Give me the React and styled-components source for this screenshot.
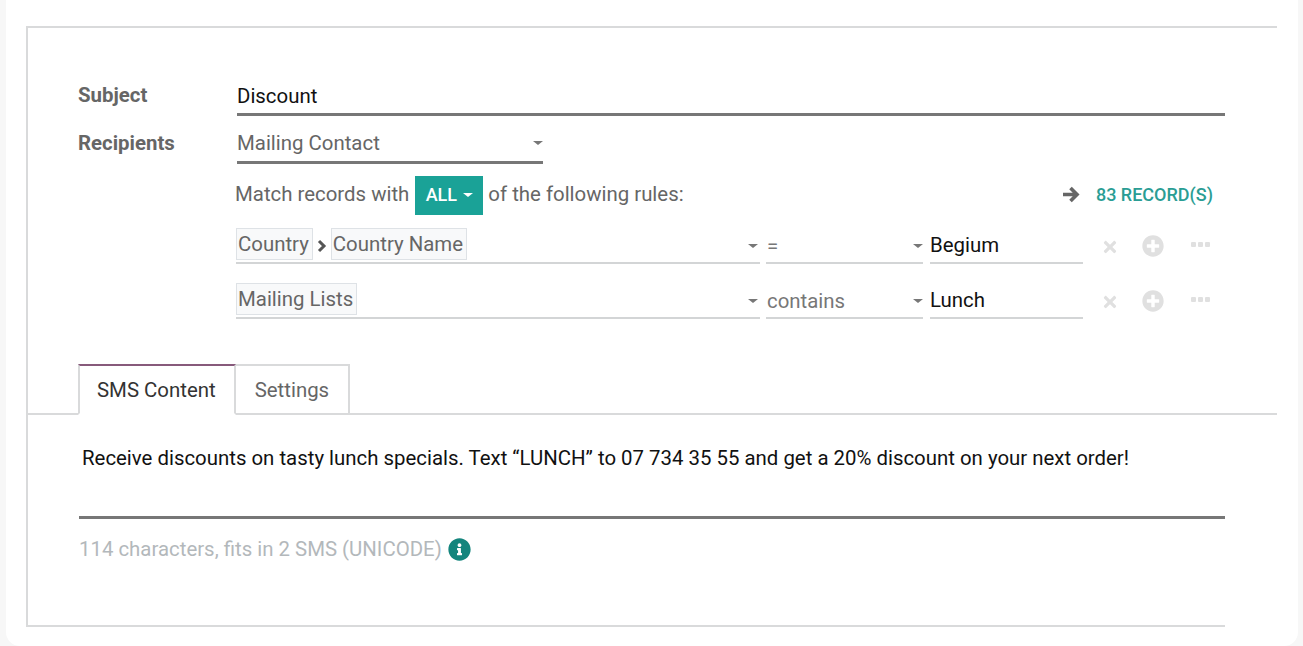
import React from 'react';
import styled, { createGlobalStyle } from 'styled-components';
import { FaInfoCircle, FaPlusCircle, FaTimes } from 'react-icons/fa';

const Global = createGlobalStyle`
  html, body {
    margin: 0;
    padding: 0;
    height: 100%;
    background: #f7f7f7;
    overflow: hidden;
  }
  body {
    font-family: Roboto, "Liberation Sans", sans-serif;
    font-size: 20.4px;
    color: #666;
  }
`;

const rules = [
  { tags: ['Country', 'Country Name'], op: '=', value: 'Begium' },
  { tags: ['Mailing Lists'], op: 'contains', value: 'Lunch' },
];

export default function App() {
  return (
    <Page>
      <Global />
      <Card>
        <Sheet>
          <Header>
            <FieldRow>
              <Label>Subject</Label>
              <TextField>Discount</TextField>
            </FieldRow>
            <FieldRow>
              <Label>Recipients</Label>
              <SelectField>
                Mailing Contact
                <Caret />
              </SelectField>
            </FieldRow>
            <MatchRow>
              <MatchText>Match records with</MatchText>
              <AllButton>
                ALL
                <Caret $light />
              </AllButton>
              <MatchText>of the following rules:</MatchText>
              <Records>
                <ArrowIcon viewBox="0 0 18 17">
                  <path d="M1 8.5H15M8.5 2L15 8.5 8.5 15" />
                </ArrowIcon>
                <RecordCount>83 RECORD(S)</RecordCount>
              </Records>
            </MatchRow>
            <Rules>
              {rules.map((rule) => (
                <RuleRow key={rule.value}>
                  <PathCell>
                    {rule.tags.map((tag, i) => (
                      <React.Fragment key={tag}>
                        {i > 0 && (
                          <ChevronIcon viewBox="0 0 10 14">
                            <path d="M2 2l5 5-5 5" />
                          </ChevronIcon>
                        )}
                        <Tag>{tag}</Tag>
                      </React.Fragment>
                    ))}
                    <Caret />
                  </PathCell>
                  <OpCell>
                    {rule.op}
                    <Caret />
                  </OpCell>
                  <ValueCell>{rule.value}</ValueCell>
                  <RuleActions>
                    <FaTimes size={18} />
                    <FaPlusCircle size={22} />
                    <Dots>
                      <i />
                      <i />
                      <i />
                    </Dots>
                  </RuleActions>
                </RuleRow>
              ))}
            </Rules>
          </Header>
          <TabBar>
            <Tab $active>SMS Content</Tab>
            <Tab>Settings</Tab>
          </TabBar>
          <Body>
            <Message>
              Receive discounts on tasty lunch specials. Text “LUNCH” to 07 734 35 55 and get a 20% discount on your next order!
            </Message>
            <Count>
              114 characters, fits in 2 SMS (UNICODE)
              <FaInfoCircle size={23} />
            </Count>
          </Body>
        </Sheet>
      </Card>
    </Page>
  );
}

const Page = styled.div`
  height: 646px;
  padding: 0 5px 0 6px;
  box-sizing: border-box;
`;

const Card = styled.div`
  height: 100%;
  padding: 26px 21px 0 20px;
  box-sizing: border-box;
  background: #fff;
  border-radius: 0 0 14px 14px;
`;

const Sheet = styled.div`
  height: 601px;
  box-sizing: border-box;
  display: flex;
  flex-direction: column;
  border-top: 2px solid #d9dadb;
  border-left: 2px solid #d9dadb;
`;

const Header = styled.div`
  height: 336px;
  flex: none;
  padding: 43px 0 0 50px;
  box-sizing: border-box;
  width: 1197px;
`;

const FieldRow = styled.div`
  display: flex;
  height: 48px;
`;

const Label = styled.div`
  width: 159px;
  flex: none;
  height: 48px;
  line-height: 48px;
  font-weight: 700;
  color: #666;
`;

const TextField = styled.div`
  flex: 1;
  height: 42px;
  line-height: 50px;
  color: #111;
  border-bottom: 3px solid #777;
`;

const SelectField = styled.div`
  width: 306px;
  height: 36px;
  padding-top: 6px;
  display: flex;
  align-items: center;
  color: #666;
  border-bottom: 3px solid #777;
`;

const Caret = styled.i`
  flex: none;
  width: 0;
  height: 0;
  margin-left: ${(p) => (p.$light ? '6px' : 'auto')};
  border-left: 5px solid transparent;
  border-right: 5px solid transparent;
  border-top: 4px solid ${(p) => (p.$light ? '#fff' : '#777')};
`;

const MatchRow = styled.div`
  display: flex;
  align-items: center;
  height: 39px;
  margin: 9px 0 0 157px;
  color: #666;
`;

const MatchText = styled.span`
  margin-top: -3px;
`;

const AllButton = styled.div`
  display: flex;
  align-items: center;
  justify-content: center;
  width: 68px;
  height: 37px;
  padding-bottom: 2px;
  margin: 0 5px 0 6px;
  background: #1aa297;
  color: #fff;
  font-weight: 500;
  font-size: 18px;
`;

const Records = styled.div`
  margin-left: auto;
  margin-right: 12px;
  margin-top: -3px;
  display: flex;
  align-items: center;
  gap: 16px;
`;

const ArrowIcon = styled.svg`
  width: 18px;
  height: 17px;
  fill: none;
  stroke: #666;
  stroke-width: 3.6;
`;

const RecordCount = styled.span`
  color: #2a9d94;
  font-weight: 500;
  font-size: 18px;
`;

const Rules = styled.div`
  margin: 14px 0 0 1px;
  display: flex;
  flex-direction: column;
  gap: 20px;
`;

const RuleRow = styled.div`
  display: flex;
  height: 35px;
  margin-left: 157px;
`;

const Cell = styled.div`
  display: flex;
  align-items: center;
  height: 35px;
  box-sizing: border-box;
  border-bottom: 2px solid #d3d5d6;
  flex: none;
`;

const PathCell = styled(Cell)`
  width: 524px;
  padding-right: 2px;
`;

const ChevronIcon = styled.svg`
  width: 10px;
  height: 14px;
  margin: 0 4px;
  flex: none;
  fill: none;
  stroke: #555;
  stroke-width: 3;
`;

const OpCell = styled(Cell)`
  width: 157px;
  margin-left: 6px;
  padding-left: 1px;
  color: #777;
`;

const ValueCell = styled(Cell)`
  width: 153px;
  margin-left: 7px;
  padding-bottom: 1px;
  color: #111;
`;

const Tag = styled.span`
  display: block;
  height: 30px;
  line-height: 30px;
  margin-top: -3px;
  padding: 0 3px 0 1px;
  background: #f8f9fa;
  border: 1px solid #dee2e6;
  color: #666;
`;

const RuleActions = styled.div`
  display: flex;
  align-items: center;
  height: 33px;
  padding-left: 18px;
  color: #e0e0e0;
  svg:first-child {
    margin-top: 3px;
  }
  svg:nth-child(2) {
    margin-left: 23px;
  }
`;

const Dots = styled.span`
  display: flex;
  gap: 2px;
  margin-left: 27px;
  margin-top: -3px;
  i {
    width: 5px;
    height: 5px;
    background: #e0e0e0;
    border-radius: 1px;
  }
`;

const TabBar = styled.div`
  display: flex;
  flex: none;
  height: 51px;
  padding-left: 50px;
  box-sizing: border-box;
  border-bottom: 2px solid #d9dadb;
`;

const Tab = styled.div`
  height: 51px;
  line-height: 48px;
  box-sizing: border-box;
  padding: ${(p) => (p.$active ? '0 18px 0 17px' : '0 19px')};
  background: #fff;
  color: ${(p) => (p.$active ? '#333' : '#666')};
  border: 2px solid #d9dadb;
  border-left-width: ${(p) => (p.$active ? '2px' : '0')};
  border-top-color: ${(p) => (p.$active ? '#875a7b' : '#d9dadb')};
  border-bottom-color: ${(p) => (p.$active ? '#fff' : '#d9dadb')};
`;

const Body = styled.div`
  flex: 1;
  width: 1197px;
  padding-left: 51px;
  box-sizing: border-box;
  border-bottom: 2px solid #d9dadb;
`;

const Message = styled.div`
  height: 104px;
  padding: 29px 0 0 3px;
  box-sizing: border-box;
  line-height: 28px;
  color: #111;
  border-bottom: 3px solid #777;
`;

const Count = styled.div`
  display: flex;
  align-items: center;
  gap: 6px;
  height: 60px;
  color: #b3b8bb;
  svg {
    color: #14857d;
  }
`;
